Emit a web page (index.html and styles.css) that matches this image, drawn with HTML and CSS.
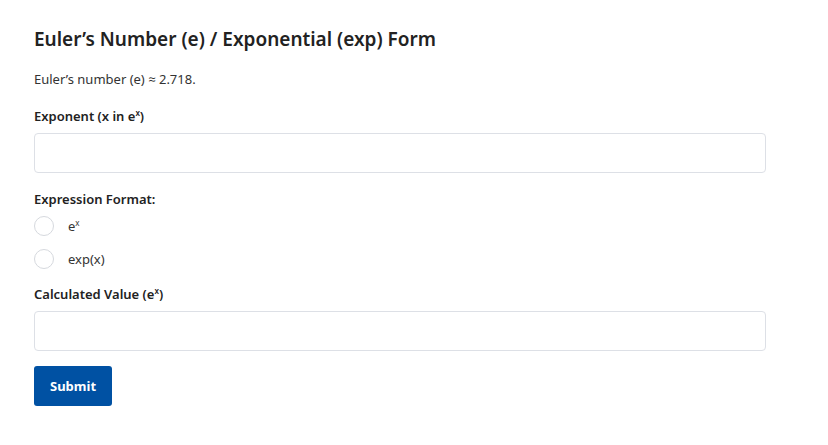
FILE: index.html
```html
<!DOCTYPE html>
<html lang="en">
<head>
  <meta charset="UTF-8">
  <title>Euler's Number Form</title>
  <link rel="stylesheet" href="styles.css">
</head>
<body>
  <div class="form-container">
    <h2>Euler’s Number (e) / Exponential (exp) Form</h2>
    <p class="note">Euler’s number (e) ≈ 2.718.</p>
    <form>
      <label for="exponent">Exponent (x in e<sup>x</sup>)</label>
      <input type="text" id="exponent" name="exponent">

      <span class="group-label">Expression Format:</span>
      <div class="radio-row">
        <input type="radio" id="fmt-e" name="format" value="ex">
        <label for="fmt-e">e<sup>x</sup></label>
      </div>
      <div class="radio-row last">
        <input type="radio" id="fmt-exp" name="format" value="exp">
        <label for="fmt-exp">exp(x)</label>
      </div>

      <label for="result">Calculated Value (e<sup>x</sup>)</label>
      <input type="text" id="result" name="result">

      <button type="submit">Submit</button>
    </form>
  </div>
</body>
</html>
```

FILE: styles.css
```css
/* General Styles */
body {
  margin: 0;
  font-family: "Noto Sans", "Open Sans", sans-serif;
  background-color: #ffffff;
  color: #222;
}

.form-container {
  width: 732px;
  padding: 26px 34px;
}

.form-container h2 {
  margin: 0 0 18px;
  font-size: 19px;
  font-weight: 600;
  color: #222;
}

.note {
  margin: 0 0 19px;
  font-size: 13px;
  color: #333;
}

sup {
  font-size: 8px;
  vertical-align: 5px;
  line-height: 0;
}

form label,
.group-label {
  display: block;
  margin-bottom: 8px;
  font-size: 13px;
  font-weight: 600;
  color: #222;
}

form input[type="text"] {
  display: block;
  width: 100%;
  height: 40px;
  margin: 0 0 17px;
  border: 1px solid #dde0e6;
  border-radius: 4px;
  box-sizing: border-box;
}

#result {
  margin-bottom: 15px;
}

/* Radio Options */
.radio-row {
  display: flex;
  align-items: center;
  gap: 14px;
  margin-bottom: 13px;
}

.radio-row.last {
  margin-bottom: 16px;
}

.radio-row input {
  appearance: none;
  width: 20px;
  height: 20px;
  margin: 0;
  border: 1px solid #d6d9de;
  border-radius: 50%;
}

.radio-row label {
  margin: 0;
  font-weight: 400;
  color: #333;
}

form button {
  padding: 0 16px;
  height: 40px;
  background-color: #0051a3;
  color: white;
  border: none;
  border-radius: 3px;
  font-family: inherit;
  font-size: 13px;
  font-weight: 700;
  cursor: pointer;
}
```
